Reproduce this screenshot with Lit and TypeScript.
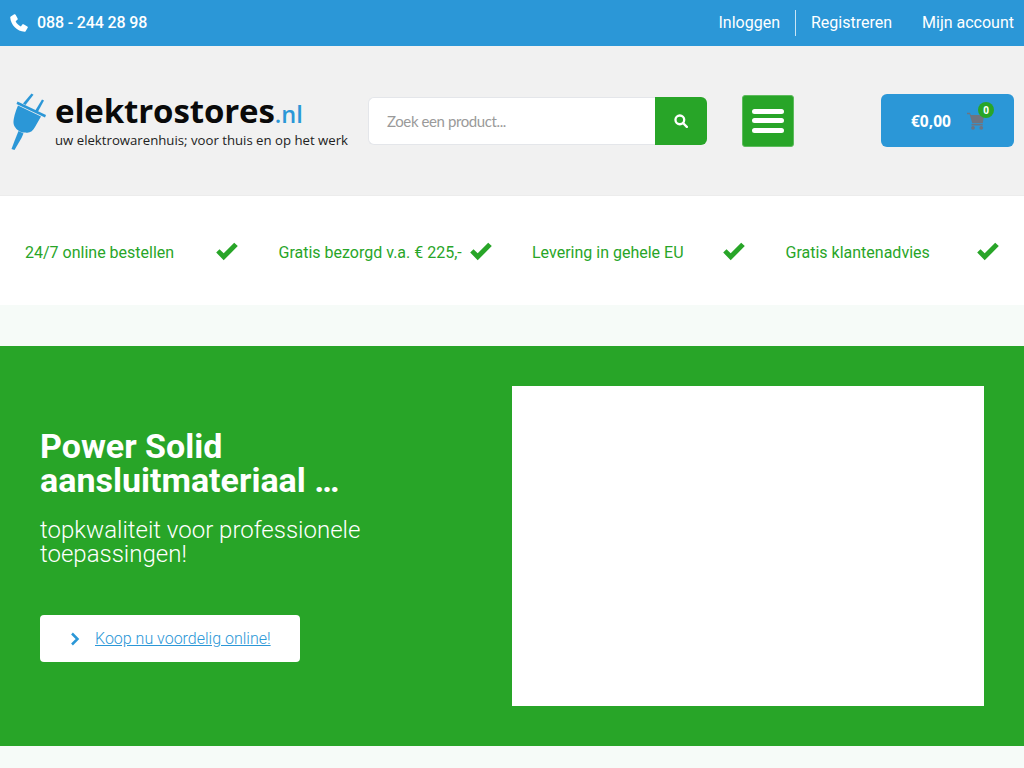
import { LitElement, html, css, svg } from "lit";
import { customElement } from "lit/decorators.js";

const check = svg`<path d="M1.200 11.500 L4.500 8.200 L8.700 12.300 L19.200 1.700 L22.800 5.100 L8.700 19.300 Z" fill="currentColor"/>`;

@customElement("app-root")
export class AppRoot extends LitElement {
  static styles = css`
    :host { display: block; font-family: Roboto, "Liberation Sans", sans-serif; background: #f6fbf8; min-height: 768px; overflow: hidden; }
    * { box-sizing: border-box; }
    .top { height: 46px; background: #2b97d7; color: #fff; display: flex; align-items: center; justify-content: space-between; padding: 0 10px 1px; font-size: 16px; line-height: 26px; }
    .phone { display: flex; align-items: center; gap: 9px; font-weight: 500; letter-spacing: -0.14px; }
    .phone svg { width: 18px; height: 18px; display: block; }
    .links { display: flex; align-items: center; font-weight: 400; }
    .links span { display: block; }
    .links .a { padding-right: 15px; border-right: 1px solid rgba(255,255,255,.75); }
    .links .b { padding: 0 30px 0 15px; }
    .head { height: 150px; background: #f1f1f1; border-bottom: 1px solid #ececec; display: flex; align-items: center; padding: 0 10px; }
    .logo { width: 358px; display: flex; align-items: center; flex: none; }
    .logo svg { width: 45px; height: 60px; flex: none; display: block; }
    .logotext { display: flex; flex-direction: column; font-family: "Open Sans", sans-serif; color: #0a0a0a; }
    .brand { font-size: 33px; font-weight: 700; line-height: 33px; letter-spacing: -0.12px; margin: 2.500px 0 0; white-space: nowrap; }
    .brand i { font-style: normal; color: #2b97d7; font-size: 23.500px; font-weight: 600; letter-spacing: 0; }
    .tag { font-size: 13.200px; line-height: 18px; color: #222; margin-bottom: 0.500px; white-space: nowrap; }
    .search { display: flex; width: 339px; height: 48px; flex: none; }
    .input { width: 287px; height: 48px; background: #fff; border: 1px solid #e4e6ea; border-right: 0; border-radius: 6px 0 0 6px; padding-left: 18px; display: flex; align-items: center; font-family: Lato, sans-serif; font-size: 15px; letter-spacing: -0.4px; color: #9a9a9a; }
    .sbtn { width: 52px; height: 48px; background: #28a528; border-radius: 0 6px 6px 0; display: flex; align-items: center; justify-content: center; }
    .sbtn svg { width: 14px; height: 14px; }
    .menu { margin-left: 35px; width: 52px; height: 52px; background: #28a528; border-radius: 3px; border: 1px solid #5dbb5d; display: flex; flex-direction: column; align-items: center; justify-content: center; gap: 4.500px; flex: none; }
    .menu b { display: block; width: 32px; height: 5px; background: #fff; border-radius: 3px; }
    .cart { margin-left: auto; width: 133px; height: 53px; background: #2b97d7; border-radius: 6px; display: flex; align-items: center; color: #fff; font-family: "Open Sans", sans-serif; font-weight: 700; font-size: 15.500px; padding-left: 30px; position: relative; }
    .cart svg { position: absolute; left: 86px; top: 18px; width: 18px; height: 18px; }
    .badge { position: absolute; left: 97px; top: 8px; width: 16px; height: 16px; border-radius: 50%; background: #28a528; color: #fff; font-size: 10px; font-weight: 700; display: flex; align-items: center; justify-content: center; }
    .feat { height: 109px; background: #fff; display: grid; grid-template-columns: repeat(4, 253.500px); padding-top: 3px; align-items: center; color: #28a528; font-size: 16px; }
    .fi { display: flex; align-items: center; justify-content: space-between; padding-left: 25px; padding-right: 14.500px; white-space: nowrap; }
    .fi svg { width: 24px; height: 21px; flex: none; display: block; margin-bottom: 1px; }
    .spacer { height: 41px; }
    .hero { height: 400px; background: #28a528; padding: 40px; display: flex; color: #fff; }
    .left { width: 472px; flex: none; padding-top: 43px; }
    h1 { margin: 0; font-size: 34px; font-weight: 700; line-height: 34px; }
    .sub { margin: 21px 0 0; font-size: 24px; line-height: 24px; font-weight: 300; }
    .btn { margin-top: 49px; width: 260px; height: 47px; background: #fff; border-radius: 4px; display: flex; align-items: center; padding-left: 30px; gap: 15px; color: #2b97d7; font-size: 16px; font-weight: 300; text-decoration: underline; }
    .btn svg { width: 10px; height: 14px; flex: none; }
    .white { width: 472px; height: 320px; background: #fff; flex: none; }
  `;

  render() {
    const feats = ["24/7 online bestellen", "Gratis bezorgd v.a. € 225,-", "Levering in gehele EU", "Gratis klantenadvies"];
    return html`
      <div class="top">
        <div class="phone">
          <svg viewBox="0 0 24 24"><path fill="#fff" d="M1 3.200 5.600.4c.7-.4 1.500-.2 1.900.5l2.700 5c.3.600.2 1.300-.3 1.700L7.500 9.500c1.300 3 4 5.700 7 7l1.900-2.400c.4-.5 1.100-.6 1.700-.3l5 2.700c.7.400.9 1.200.5 1.900L20.800 23c-.3.500-.8.800-1.400.700C9.500 23 1 14.500.3 4.600.3 4 .5 3.500 1 3.200Z"/></svg>
          <span>088 - 244 28 98</span>
        </div>
        <div class="links"><span class="a">Inloggen</span><span class="b">Registreren</span><span>Mijn account</span></div>
      </div>
      <div class="head">
        <div class="logo">
          <svg viewBox="0 0 45 60">
            <g fill="#2b97d7">
              <path d="M13 12.500 L21.500 2.500 L23.500 3.800 L15.500 14 Z"/>
              <path d="M25 20 L32 8.500 L34 9.600 L27.500 21.500 Z"/>
              <path d="M7.500 10.500 L36 24 L35 26.500 L6.500 13 Z"/>
              <path d="M8 14.500 L31 25.500 L25 36 C23 40 19.500 42.500 15.500 41.500 L12 41.500 C8 40 4 36.500 3.500 32 C3.300 28 5.500 20 8 14.500 Z"/>
              <path d="M8.500 40 L13.500 42.500 L11.500 47 L4.500 59 L1.500 58 L4.500 50 Z"/>
            </g>
          </svg>
          <div class="logotext">
            <div class="brand">elektrostores<i>.nl</i></div>
            <div class="tag">uw elektrowarenhuis; voor thuis en op het werk</div>
          </div>
        </div>
        <div class="search">
          <div class="input">Zoek een product...</div>
          <div class="sbtn"><svg viewBox="0 0 24 24"><circle cx="10" cy="10" r="7.500" fill="none" stroke="#fff" stroke-width="4"/><path d="M15.500 15.500 22 22" stroke="#fff" stroke-width="4" stroke-linecap="round"/></svg></div>
        </div>
        <div class="menu"><b></b><b></b><b></b></div>
        <div class="cart">
          €0,00
          <svg viewBox="0 0 24 24"><path fill="#6f7480" d="M0 1h4l1 3h18l-2 11H7L3.500 3H0Z"/><path fill="#6f7480" d="M6 16h15v2H6z"/><circle cx="8" cy="21" r="2.500" fill="#6f7480"/><circle cx="19" cy="21" r="2.500" fill="#6f7480"/></svg>
          <span class="badge">0</span>
        </div>
      </div>
      <div class="feat">
        ${feats.map((f) => html`<div class="fi"><span>${f}</span><svg viewBox="0 0 24 21">${check}</svg></div>`)}
      </div>
      <div class="spacer"></div>
      <div class="hero">
        <div class="left">
          <h1>Power Solid<br />aansluitmateriaal …</h1>
          <p class="sub">topkwaliteit voor professionele<br />toepassingen!</p>
          <div class="btn">
            <svg viewBox="0 0 10 14"><path d="M2 1.500 7.500 7 2 12.500" fill="none" stroke="#2b97d7" stroke-width="2.500"/></svg>
            <span>Koop nu voordelig online!</span>
          </div>
        </div>
        <div class="white"></div>
      </div>
    `;
  }
}
